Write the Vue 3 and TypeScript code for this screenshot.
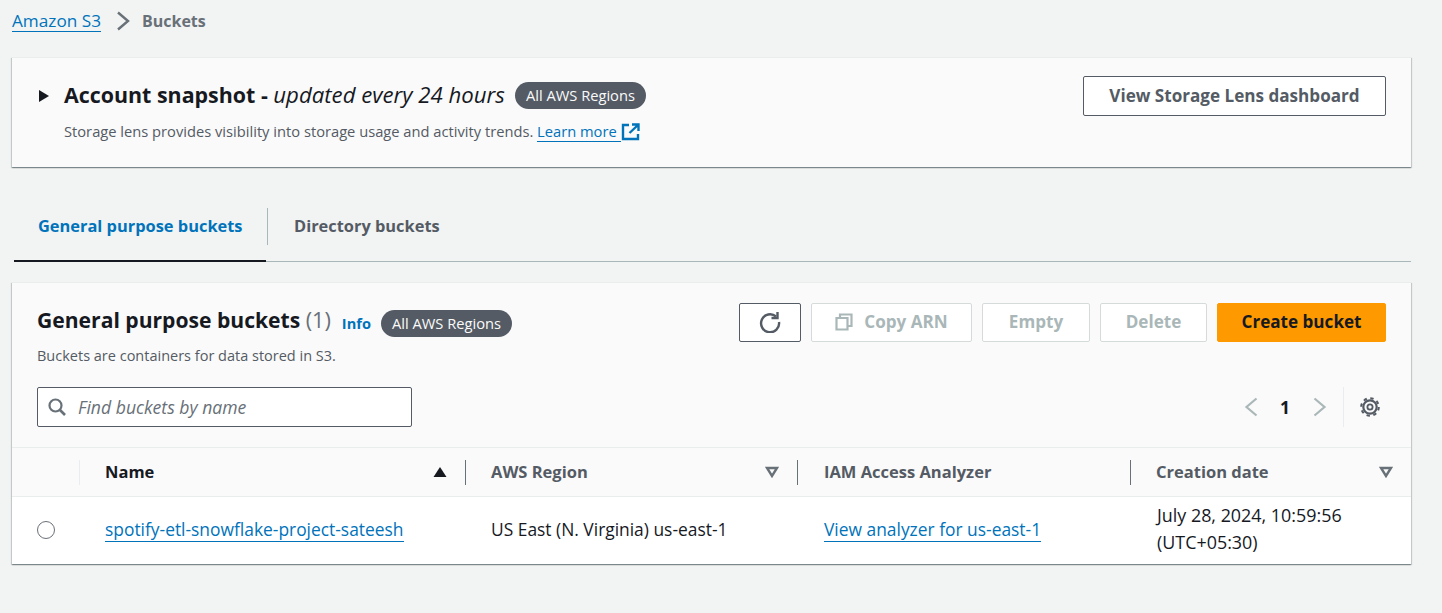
<script setup lang="ts">
// S3 bucket list console page
const actions = [
  { label: 'Copy ARN', width: 161, icon: true },
  { label: 'Empty', width: 108, icon: false },
  { label: 'Delete', width: 107, icon: false },
];

type Col = { label: string; sort: 'asc' | 'none' | null };
const columns: Col[] = [
  { label: 'Name', sort: 'asc' },
  { label: 'AWS Region', sort: 'none' },
  { label: 'IAM Access Analyzer', sort: null },
  { label: 'Creation date', sort: 'none' },
];
</script>

<template>
  <div class="page">
    <nav class="crumbs">
      <a class="link">Amazon S3</a>
      <svg class="crumb-sep" width="14" height="20" viewBox="0 0 14 20"><path d="M2 1.500l10 8.500-10 8.500" fill="none" stroke="#687078" stroke-width="2.400"/></svg>
      <span class="crumb-now">Buckets</span>
    </nav>

    <section class="card snapshot">
      <div class="snap-left">
        <div class="snap-title">
          <svg class="caret" width="12" height="14" viewBox="0 0 12 14"><path d="M1 1l10 6-10 6z" fill="#16191f"/></svg>
          <h2>Account snapshot - <em>updated every 24 hours</em></h2>
          <span class="pill">All AWS Regions</span>
        </div>
        <p class="desc snap-desc">
          Storage lens provides visibility into storage usage and activity trends.
          <a class="link">Learn more&nbsp;</a><svg class="ext" width="19" height="18" viewBox="0 0 19 18"><path d="M8 2H2v14h15v-5M11 1.500h6.500V8M17 2L8.500 10" fill="none" stroke="#0073bb" stroke-width="2.400"/></svg>
        </p>
      </div>
      <button class="btn lens">View Storage Lens dashboard</button>
    </section>

    <div class="tabs">
      <div class="tab active"><span>General purpose buckets</span></div>
      <div class="tab"><span>Directory buckets</span></div>
    </div>

    <section class="card buckets">
      <div class="head">
        <div class="head-row">
          <div>
            <div class="title-row">
              <h2>General purpose buckets <span class="count">(1)</span></h2>
              <a class="info">Info</a>
              <span class="pill">All AWS Regions</span>
            </div>
            <p class="desc list-desc">Buckets are containers for data stored in S3.</p>
          </div>
          <div class="actions">
            <button class="btn refresh" aria-label="Refresh">
              <svg width="22" height="22" viewBox="0 0 22 22"><path d="M17 5.500A9 9 0 1 0 20 11" fill="none" stroke="#545b64" stroke-width="2.400"/><path d="M18.500 1v6h-6" fill="none" stroke="#545b64" stroke-width="2.400"/></svg>
            </button>
            <button v-for="a in actions" :key="a.label" class="btn off" :style="{ width: a.width + 'px' }">
              <svg v-if="a.icon" width="18" height="18" viewBox="0 0 18 18"><path d="M1.500 5h11v11.500h-11zM5 5V1.500h11.500V13H12.500" fill="none" stroke="#aab7b8" stroke-width="2.200"/></svg>
              {{ a.label }}
            </button>
            <button class="btn primary">Create bucket</button>
          </div>
        </div>
        <div class="filter-row">
          <label class="search">
            <svg width="18" height="18" viewBox="0 0 18 18"><circle cx="7.500" cy="7.500" r="6" fill="none" stroke="#687078" stroke-width="2.200"/><path d="M12 12l5 5" stroke="#687078" stroke-width="2.600"/></svg>
            <input placeholder="Find buckets by name" />
          </label>
          <div class="pager">
            <svg width="14" height="20" viewBox="0 0 14 20"><path d="M12.500 1.500L2.500 10l10 8.500" fill="none" stroke="#aab7b8" stroke-width="2.200"/></svg>
            <b>1</b>
            <svg width="14" height="20" viewBox="0 0 14 20"><path d="M1.500 1.500L11.500 10l-10 8.500" fill="none" stroke="#aab7b8" stroke-width="2.200"/></svg>
            <span class="pager-sep"></span>
            <svg class="gear" width="20" height="20" viewBox="0 0 20 20" fill="none" stroke="#545b64">
              <circle cx="10" cy="10" r="8.800" stroke-width="2" stroke-dasharray="3.400 3.510"/>
              <circle cx="10" cy="10" r="6.700" stroke-width="2.200"/>
              <circle cx="10" cy="10" r="2.600" stroke-width="1.800"/>
            </svg>
          </div>
        </div>
      </div>

      <div class="grid thead">
        <div class="th first"></div>
        <div v-for="c in columns" :key="c.label" class="th" :class="{ sorted: c.sort === 'asc' }">
          <span>{{ c.label }}</span>
          <svg v-if="c.sort === 'asc'" width="14" height="12" viewBox="0 0 14 12"><path d="M7 1l6.500 10H.5z" fill="#16191f"/></svg>
          <svg v-else-if="c.sort === 'none'" width="14" height="12" viewBox="0 0 14 12"><path d="M2 2h10L7 10z" fill="none" stroke="#687078" stroke-width="2.400"/></svg>
        </div>
      </div>
      <div class="grid row">
        <div class="td radio-cell"><span class="radio"></span></div>
        <div class="td"><a class="link">spotify-etl-snowflake-project-sateesh</a></div>
        <div class="td">US East (N. Virginia) us-east-1</div>
        <div class="td"><a class="link">View analyzer for us-east-1</a></div>
        <div class="td date">July 28, 2024, 10:59:56<br />(UTC+05:30)</div>
      </div>
    </section>
  </div>
</template>

<style>
html, body { margin: 0; background: #f2f3f3; }
</style>

<style scoped>
.page {
  height: 613px;
  box-sizing: border-box;
  padding: 11px 31px 0 12px;
  background: #f2f3f3;
  font-family: "Open Sans", "Noto Sans", sans-serif;
  font-size: 17.4px;
  color: #16191f;
  overflow: hidden;
}
.link { color: #0073bb; border-bottom: 1px solid #0073bb; }

.crumbs { display: flex; align-items: center; height: 20px; font-size: 17.2px; }
.crumbs .link { line-height: 20px; }
.crumb-sep { margin: 0 12px 0 15px; }
.crumb-now { color: #687078; font-weight: 700; font-size: 16px; }

.card {
  background: #fafafa;
  box-shadow: 0 1px 1px 0 rgba(0, 28, 36, 0.3), 1px 1px 1px 0 rgba(0, 28, 36, 0.15), -1px 1px 1px 0 rgba(0, 28, 36, 0.15);
  border-top: 1px solid #eaeded;
}

.snapshot {
  margin-top: 26px;
  height: 110px;
  box-sizing: border-box;
  padding: 18px 25px 0 26px;
  display: flex;
  justify-content: space-between;
  align-items: flex-start;
}
.snap-title { display: flex; align-items: center; height: 39px; }
.snap-title h2 { margin-top: -1px; }
.caret { margin-right: 14px; }
h2 { margin: 0; font-size: 21.4px; font-weight: 700; line-height: 30px; }
h2 em { font-weight: 400; font-size: 22.2px; }
.pill {
  display: inline-block;
  background: #545b64;
  color: #fafafa;
  border-radius: 14px;
  font-size: 14.7px;
  line-height: 27px;
  padding: 0 11px;
  margin-left: 10px;
}
.desc { margin: 0; font-size: 14.5px; line-height: 20px; color: #545b64; }
.snap-desc { padding-left: 26px; margin-top: 6px; font-size: 14.7px; }
.ext { vertical-align: -4px; }
.list-desc { margin-top: 3px; }

.btn {
  box-sizing: border-box;
  background: #fff;
  border: 1px solid #545b64;
  border-radius: 2px;
  font: 700 17.1px "Open Sans", "Noto Sans", sans-serif;
  color: #545b64;
  height: 40px;
  padding: 0 0 2px;
}
.lens { width: 303px; }

.tabs { display: flex; margin-top: 23px; margin-left: 2px; height: 71px; border-bottom: 1px solid #aab7b8; }
.tab { display: flex; padding: 18px 0 0; font-size: 16.4px; font-weight: 700; color: #545b64; }
.tab span { padding: 0 24px; height: 36px; line-height: 36px; }
.tab.active { color: #0073bb; width: 252px; border-bottom: 2px solid #16191f; margin-bottom: -1px; box-sizing: border-box; position: relative; }
.tab.active::after { content: ""; position: absolute; right: -2px; top: 18px; height: 37px; width: 1px; background: #aab7b8; }
.tab.active span { padding-right: 0; }
.tab:not(.active) span { padding-left: 28px; }

.buckets { margin-top: 20px; height: 281px; }
.head { padding: 20px 25px 0; height: 164px; box-sizing: border-box; }
.head-row { display: flex; justify-content: space-between; height: 84px; }
.title-row { display: flex; align-items: center; height: 40px; }
.title-row h2 { font-size: 21.1px; margin-top: -6px; }
.count { font-weight: 400; font-size: 21.7px; color: #687078; }
.info { font-size: 14.6px; font-weight: 700; color: #0073bb; margin-left: 11px; }
.actions { display: flex; gap: 10px; align-items: flex-start; }
.actions .btn { height: 39px; }
.refresh { width: 62px; display: flex; align-items: center; justify-content: center; }
.off { border-color: #d5dbdb; color: #aab7b8; display: flex; align-items: center; justify-content: center; gap: 11px; }
.primary { width: 169px; background: #ff9900; border-color: #ff9900; color: #16191f; }

.filter-row { display: flex; justify-content: space-between; align-items: center; }
.search {
  width: 375px;
  height: 40px;
  box-sizing: border-box;
  display: flex;
  align-items: center;
  gap: 12px;
  padding-left: 10px;
  background: #fff;
  border: 1px solid #545b64;
  border-radius: 2px;
}
.search input { border: 0; outline: 0; padding: 0; background: transparent; flex: 1; font: italic 400 17.6px "Open Sans", "Noto Sans", sans-serif; }
.search input::placeholder { color: #687078; opacity: 1; }
.pager { display: flex; align-items: center; height: 40px; }
.pager b { font-weight: 700; font-size: 17.4px; margin: 0 23px 0 22px; }
.pager-sep { width: 1px; height: 40px; background: #eaeded; margin: 0 0 0 16px; }
.gear { margin: 0 6px 0 16px; }

.grid { display: grid; grid-template-columns: 67px 386px 332px 333px 1fr; }
.thead { height: 50px; border-top: 1px solid #eaeded; border-bottom: 1px solid #eaeded; box-sizing: border-box; }
.th {
  display: flex;
  align-items: center;
  justify-content: space-between;
  position: relative;
  padding: 0 18px 0 26px;
  font-weight: 700;
  font-size: 16.5px;
  color: #545b64;
}
.th > span { margin-bottom: 2px; }
.th.sorted { color: #16191f; }
.th::before { content: ""; position: absolute; left: 0; top: 12px; height: 25px; width: 1px; background: #687078; }
.th.first::before { background: #eaeded; left: 67px; }
.th.first + .th::before { display: none; }
.th:nth-child(4), .td:nth-child(4) { padding-left: 27px; }

.row { background: #fff; height: 67px; align-items: center; }
.td { padding: 0 0 3px 26px; font-size: 17.4px; line-height: 27px; }
.date { font-size: 17.9px; padding-left: 27px; }
.radio-cell { padding: 0 0 2px 25px; display: flex; }
.radio { width: 16px; height: 16px; border: 1px solid #687078; border-radius: 50%; }
</style>
